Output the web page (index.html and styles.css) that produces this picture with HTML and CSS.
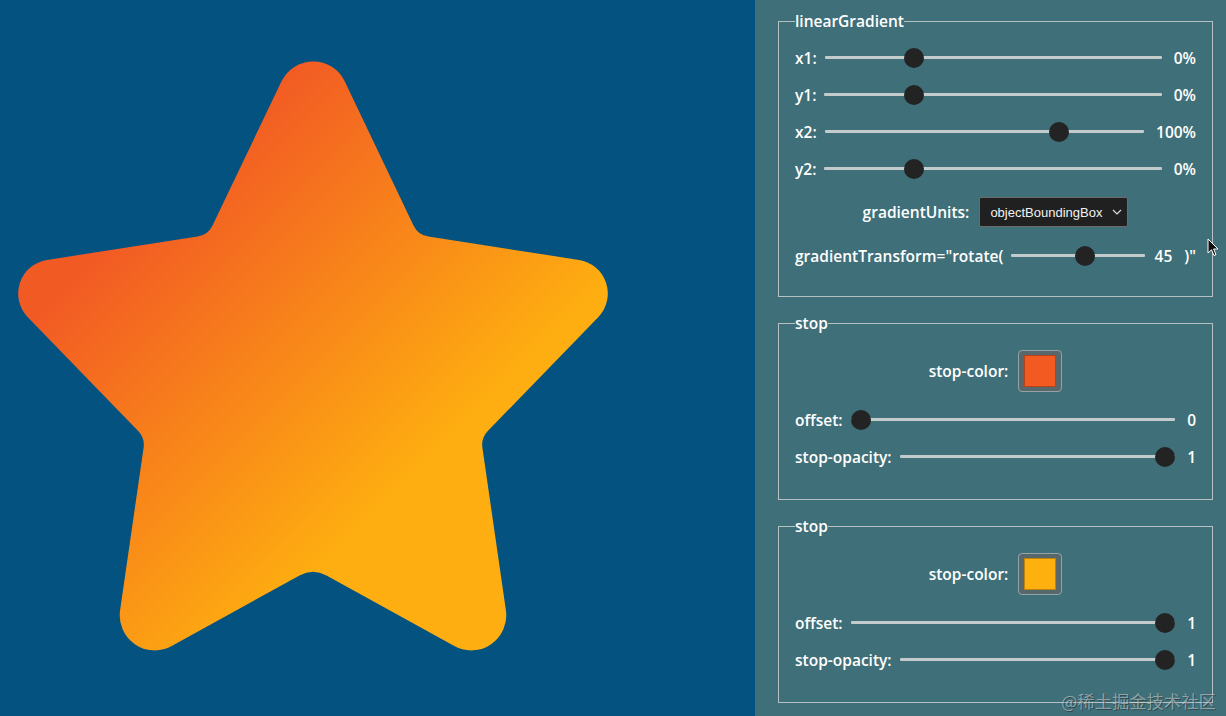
FILE: index.html
```html
<!DOCTYPE html>
<html lang="en">
<head>
<meta charset="utf-8">
<title>linearGradient demo</title>
<link rel="stylesheet" href="styles.css">
</head>
<body>
<div class="app">
  <div class="stage">
    <svg class="star" viewBox="0 0 755 716" width="755" height="716">
      <defs>
        <linearGradient id="grad" x1="176" y1="176" x2="445" y2="445" gradientUnits="userSpaceOnUse">
          <stop offset="0" stop-color="#F25A24" stop-opacity="1"/>
          <stop offset="1" stop-color="#FEAE10" stop-opacity="1"/>
        </linearGradient>
      </defs>
      <path fill="url(#grad)" d="M 281.4 81.6 A 35 35 0 0 1 344.8 81.5 L 413.5 225.5 A 20 20 0 0 0 428.4 236.6 L 579 259.9 A 34 34 0 0 1 598.2 317.2 L 487.8 431 A 20 20 0 0 0 482.4 447.7 L 505.9 610.3 A 35 35 0 0 1 454.3 646 L 326.5 575.4 A 28 28 0 0 0 299.5 575.4 L 171.7 646 A 35 35 0 0 1 120.1 610.3 L 143.6 447.7 A 20 20 0 0 0 138.2 431 L 27.8 317.2 A 34 34 0 0 1 47 259.9 L 197.6 236.6 A 20 20 0 0 0 212.5 225.5 Z"/>
    </svg>
  </div>
  <div class="panel">
    <fieldset class="group group-gradient">
      <legend>linearGradient</legend>
      <div class="row"><label>x1:</label><input type="range" min="-50" max="150" value="0"><span class="val">0%</span></div>
      <div class="row"><label>y1:</label><input type="range" min="-50" max="150" value="0"><span class="val">0%</span></div>
      <div class="row"><label>x2:</label><input type="range" min="-50" max="150" value="100"><span class="val">100%</span></div>
      <div class="row"><label>y2:</label><input type="range" min="-50" max="150" value="0"><span class="val">0%</span></div>
      <div class="row row-center row-select">
        <label>gradientUnits:</label>
        <div class="select-wrap">
          <select class="select"><option>objectBoundingBox</option><option>userSpaceOnUse</option></select>
          <svg class="chev" viewBox="0 0 10 6" width="10" height="6"><path d="M1 1 L5 5 L9 1" fill="none" stroke="#ddd" stroke-width="1.2"/></svg>
        </div>
      </div>
      <div class="row"><label>gradientTransform="rotate(</label><input type="range" min="-360" max="360" value="45"><span class="val val-num">45</span><span class="close">)"</span></div>
    </fieldset>

    <fieldset class="group">
      <legend>stop</legend>
      <div class="row row-center row-color"><label>stop-color:</label><div class="swatch"><div class="chip chip-a"></div></div></div>
      <div class="row"><label>offset:</label><input type="range" min="0" max="1" step="0.01" value="0"><span class="val">0</span></div>
      <div class="row"><label>stop-opacity:</label><input type="range" min="0" max="1" step="0.01" value="1"><span class="val">1</span></div>
    </fieldset>

    <fieldset class="group">
      <legend>stop</legend>
      <div class="row row-center row-color"><label>stop-color:</label><div class="swatch"><div class="chip chip-b"></div></div></div>
      <div class="row"><label>offset:</label><input type="range" min="0" max="1" step="0.01" value="1"><span class="val">1</span></div>
      <div class="row"><label>stop-opacity:</label><input type="range" min="0" max="1" step="0.01" value="1"><span class="val">1</span></div>
    </fieldset>

    <svg class="cursor" viewBox="0 0 12 19" width="12" height="19"><path d="M1 1 L1 15 L4.5 11.8 L7 17.5 L9 16.6 L6.6 11 L11 11 Z" fill="#111" stroke="#fff" stroke-width="1" stroke-linejoin="round"/></svg>
    <div class="watermark">@稀土掘金技术社区</div>
  </div>
</div>
</body>
</html>
```

FILE: styles.css
```css
* { box-sizing: border-box; }
html, body { margin: 0; padding: 0; }
body {
  width: 1226px;
  height: 716px;
  overflow: hidden;
  font-family: "Open Sans", Lato, "Liberation Sans", sans-serif;
  background: #3f6f78;
}
.app {
  display: flex;
  width: 1226px;
  height: 716px;
}
.stage {
  width: 755px;
  height: 716px;
  flex: none;
  background: #04527f;
}
.star { display: block; }

.panel {
  position: relative;
  flex: 1;
  background: #3f6f78;
  padding: 11px 13px 0 23px;
  color: #fff;
}
.group {
  margin: 0 0 16px 0;
  border: 1px solid #b7c0c2;
  padding: 8px 16px 24px 16px;
  min-width: 0;
}
.group-gradient { padding-bottom: 22px; }
legend {
  padding: 0;
  font-size: 15.5px;
  line-height: 20px;
  font-weight: 600;
  color: #fff;
}
.row {
  display: flex;
  align-items: center;
  height: 37px;
  gap: 8px;
  font-size: 15.5px;
  font-weight: 600;
  white-space: nowrap;
}
.row label { flex: none; }
.row-center { justify-content: center; gap: 10px; }
.row-select { height: 50px; }
.row-color { height: 60px; }
.val { flex: none; margin-left: 4px; text-align: right; }
.val-num { margin-left: 2px; }
.close { flex: none; margin-left: 4px; }

input[type=range] {
  -webkit-appearance: none;
  appearance: none;
  flex: 1;
  min-width: 0;
  height: 22px;
  margin: 0;
  background: transparent;
}
input[type=range]::-webkit-slider-runnable-track {
  height: 3px;
  background: #c3cbcc;
  border-radius: 1px;
}
input[type=range]::-webkit-slider-thumb {
  -webkit-appearance: none;
  appearance: none;
  width: 20px;
  height: 20px;
  border-radius: 50%;
  background: #232323;
  border: none;
  margin-top: -8.5px;
}

.select-wrap {
  position: relative;
  width: 149px;
  height: 30px;
  flex: none;
}
.select {
  -webkit-appearance: none;
  appearance: none;
  width: 100%;
  height: 100%;
  margin: 0;
  padding: 0 0 0 10px;
  background: #202020;
  color: #f2f2f2;
  border: 1px solid #6b6b6b;
  border-radius: 2px;
  font-family: "Liberation Sans", Arial, sans-serif;
  font-size: 13px;
}
.chev {
  position: absolute;
  right: 6px;
  top: 12px;
}

.swatch {
  width: 44px;
  height: 42px;
  flex: none;
  border: 1px solid #95a3a6;
  border-radius: 4px;
  background: #56686c;
  padding: 4px 5px;
}
.chip {
  width: 100%;
  height: 100%;
  border: 1px solid rgba(0,0,0,0.25);
}
.chip-a { background: #f25a22; }
.chip-b { background: #feb00f; }

.cursor {
  position: absolute;
  left: 452px;
  top: 238px;
}
.watermark {
  position: absolute;
  right: 10px;
  bottom: 4px;
  font-family: "Noto Sans CJK SC", sans-serif;
  font-size: 17px;
  line-height: 22px;
  color: rgba(210, 215, 216, 0.55);
  text-shadow: 1px 1px 0 rgba(30, 40, 42, 0.5);
  letter-spacing: 0.3px;
}
```
